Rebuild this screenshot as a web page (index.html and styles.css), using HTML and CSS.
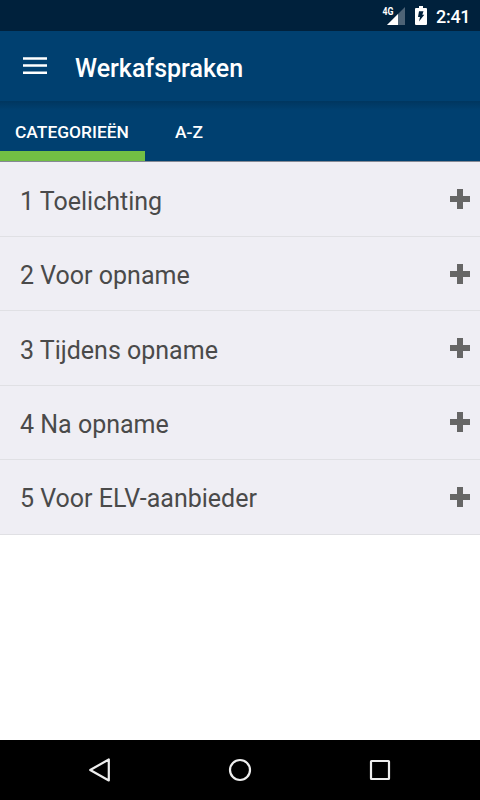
FILE: index.html
```html
<!DOCTYPE html>
<html lang="nl">
<head>
	<meta charset="UTF-8">
	<title>Werkafspraken</title>
<link rel="stylesheet" href="styles.css">
</head>
<body>
	<div class="status">
		<svg class="signal" width="24" height="20" viewBox="0 0 24 20">
			<path d="M23 2v18H5z" fill="#4d6376"/>
			<path d="M16 9v11H5z" fill="#fff"/>
			<text class="network" x="0.5" y="10" textLength="11" lengthAdjust="spacingAndGlyphs">4G</text>
		</svg>
		<svg class="battery" width="12" height="19" viewBox="0 0 12 19">
			<path d="M4 0h4v2h3q1 0 1 1v15q0 1-1 1H1q-1 0-1-1V3q0-1 1-1h3z" fill="#fff"/>
			<path d="M4 5.3h4.5L7.3 8.8h2L4 15.5l1-4.5H3z" fill="#00213c"/>
		</svg>
		<span class="clock">2:41</span>
	</div>
	<div class="header">
		<svg class="menu" width="24" height="18" viewBox="0 0 24 18">
			<path d="M0 1.5h24M0 8.6h24M0 15.7h24" stroke="#fff" stroke-width="2.5"/>
		</svg>
		<h1>Werkafspraken</h1>
	</div>
	<ul class="tabs">
		<li class="active">CATEGORIEËN</li>
		<li>A-Z</li>
	</ul>
	<ul class="list">
		<li><span>1 Toelichting</span><i class="plus"></i></li>
		<li><span>2 Voor opname</span><i class="plus"></i></li>
		<li><span>3 Tijdens opname</span><i class="plus"></i></li>
		<li><span>4 Na opname</span><i class="plus"></i></li>
		<li><span>5 Voor ELV-aanbieder</span><i class="plus"></i></li>
	</ul>
	<div class="navbar">
		<svg width="24" height="24" viewBox="0 0 24 24"><path d="M20.8 1.5v21L2.2 12z"/></svg>
		<svg width="24" height="24" viewBox="0 0 24 24"><circle cx="12" cy="12" r="10"/></svg>
		<svg width="24" height="24" viewBox="0 0 24 24"><rect x="3" y="3" width="18" height="18" rx="0.5"/></svg>
	</div>
</body>
</html>
```
FILE: styles.css
```css
body,h1,ul,li{padding: 0;margin: 0;}
li{list-style: none;}
body{
	height: 800px;
	display: flex;
	flex-direction: column;
	overflow: hidden;
	background: #fff;
	font-family: Roboto, sans-serif;
}
.status{
	height: 31px;
	box-sizing: border-box;
	padding: 0 11px 0 0;
	display: flex;
	justify-content: flex-end;
	align-items: center;
	background: #00213c;
	color: #fff;
}
.signal{
	margin: 0 9px 1px 0;
}
.network{
	font-size: 10px;
	font-weight: bold;
	fill: #fff;
}
.battery{
	margin-right: 9px;
}
.clock{
	width: 33px;
	font-size: 18px;
	letter-spacing: -0.3px;
	font-weight: 500;
	line-height: 20px;
	padding-top: 2px;
}
.header{
	height: 70px;
	display: flex;
	align-items: center;
	background: #004070;
	color: #fff;
}
.menu{
	margin: 0 28px 0 23px;
}
.header h1{
	font-size: 25px;
	font-weight: 500;
	line-height: 30px;
	padding-top: 6px;
}
.tabs{
	height: 61px;
	box-sizing: border-box;
	display: flex;
	border-bottom: 1px solid #858994;
	background: linear-gradient(#00365f, #004070 9px);
	color: #fff;
	font-size: 17.4px;
	font-weight: 500;
	line-height: 62px;
}
.tabs li{
	height: 60px;
	box-sizing: border-box;
	padding: 0 15px;
}
.tabs li + li{
	padding-left: 30px;
}
.tabs .active{
	width: 145px;
	border-bottom: 10px solid #72bf44;
}
.list{
	padding-top: 0.6px;
	background: #efeef4;
}
.list li{
	height: 74.4px;
	box-sizing: border-box;
	padding: 0 10px 0 20px;
	display: flex;
	justify-content: space-between;
	align-items: center;
	border-bottom: 1px solid #e0e0e4;
	color: #4a4a4a;
	font-size: 25px;
	line-height: 30px;
}
.list span{
	padding-top: 5px;
}
.plus{
	width: 20px;
	height: 20px;
	background: linear-gradient(#666, #666) center / 20px 6px no-repeat,
		linear-gradient(#666, #666) center / 6px 20px no-repeat;
}
.navbar{
	height: 60px;
	margin-top: auto;
	padding: 0 88px;
	display: flex;
	justify-content: space-between;
	align-items: center;
	background: #000;
}
.navbar svg{
	fill: none;
	stroke: #eee;
	stroke-width: 2.2;
	stroke-linejoin: round;
}
```
